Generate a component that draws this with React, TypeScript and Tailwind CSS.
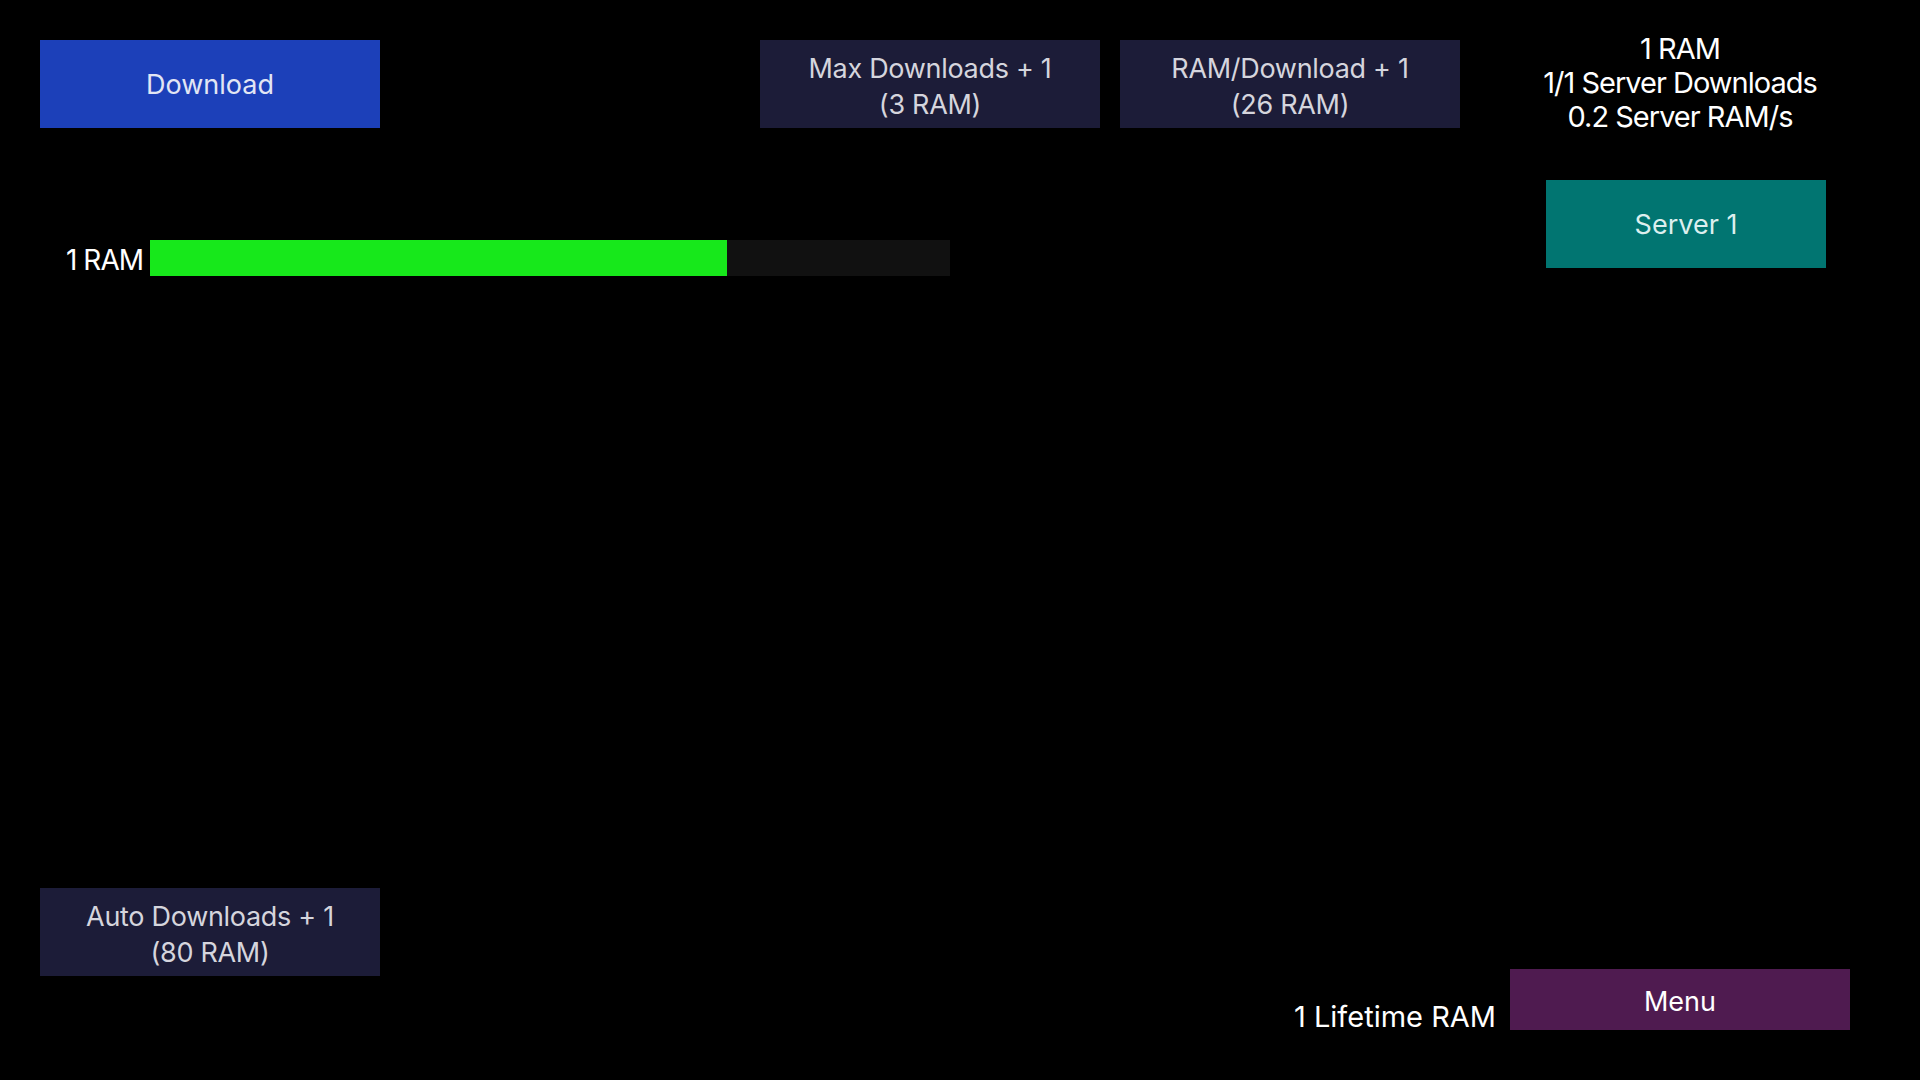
import React from "react";

type UpgradeProps = {
  label: string;
  cost: string;
  className?: string;
};

function UpgradeButton({ label, cost, className = "" }: UpgradeProps) {
  return (
    <button
      className={`flex h-[88px] w-[340px] flex-col items-center justify-center bg-[#1c1c38] pt-[5px] text-[27px] leading-[36px] tracking-[-0.3px] text-[#d5d5dd] ${className}`}
    >
      <span className="whitespace-nowrap">{label}</span>
      <span className="whitespace-nowrap">({cost})</span>
    </button>
  );
}

const progress = 0.721;

export default function App() {
  return (
    <div className="flex h-[1080px] w-full flex-col overflow-hidden bg-black font-[Inter,sans-serif] text-white">
      <div className="flex">
        {/* left: actions + progress */}
        <div className="flex w-[1460px] flex-col pl-[40px] pt-[40px]">
          <div className="flex items-start">
            <button className="flex h-[88px] w-[340px] items-center justify-center bg-[#1c40b9] pt-[3px] text-[27px] text-[#e2e6f4]">
              Download
            </button>
            <UpgradeButton label="Max Downloads + 1" cost="3 RAM" className="ml-[380px]" />
            <UpgradeButton label="RAM/Download + 1" cost="26 RAM" className="ml-[20px]" />
          </div>

          <div className="mt-[112px] flex items-start">
            <div className="h-[36px] w-[110px] whitespace-nowrap pr-[7px] text-right text-[28px] leading-[41px] tracking-[-1px]">
              1 RAM
            </div>
            <div className="h-[36px] w-[800px] bg-[#111111]">
              <div
                className="h-full bg-[#17e81b]"
                style={{ width: `${progress * 100}%` }}
              />
            </div>
          </div>
        </div>

        {/* right: server stats */}
        <div className="flex w-[460px] flex-col pt-[32px]">
          <div className="flex w-[440px] flex-col items-center whitespace-nowrap text-[29px] leading-[34px] tracking-[-1px]">
            <span>1 RAM</span>
            <span>1/1 Server Downloads</span>
            <span>0.2 Server RAM/s</span>
          </div>
          <button className="ml-[86px] mt-[46px] flex h-[88px] w-[280px] items-center justify-center bg-[#017571] pt-[3px] text-[27px] text-[#dcefee]">
            Server 1
          </button>
        </div>
      </div>

      <div className="flex-1" />

      <div className="flex items-start pb-[50px] pl-[40px] pr-[70px]">
        <UpgradeButton label="Auto Downloads + 1" cost="80 RAM" />
        <div className="ml-auto mt-[81px] flex items-end">
          <span className="mb-[-4px] mr-[14px] whitespace-nowrap text-[29px] leading-[34px]">
            1 Lifetime RAM
          </span>
          <button className="flex h-[61px] w-[340px] items-center justify-center bg-[#4f1b50] pt-[5px] text-[27px] text-white">
            Menu
          </button>
        </div>
      </div>
    </div>
  );
}
